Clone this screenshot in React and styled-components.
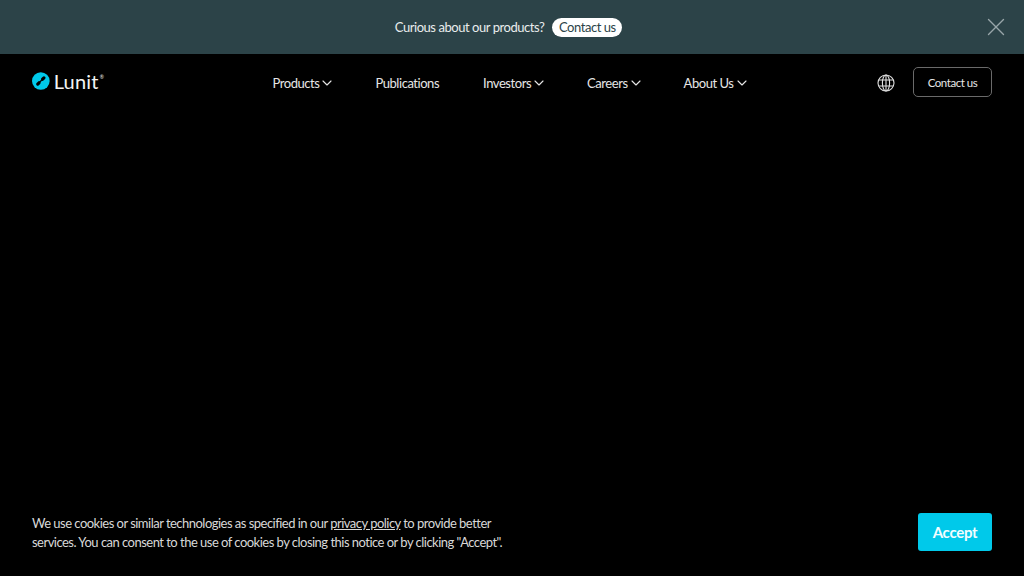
import styled, { createGlobalStyle } from "styled-components";
import { ChevronDown, X } from "lucide-react";

const GlobalStyle = createGlobalStyle`
  html, body {
    margin: 0;
    height: 100%;
    background: #000;
  }
  body {
    font-family: "Lato", "Liberation Sans", sans-serif;
    color: #fff;
  }
  #root {
    height: 100%;
  }
`;

const Page = styled.div`
  height: 100vh;
  display: flex;
  flex-direction: column;
  overflow: hidden;
`;

const Banner = styled.div`
  height: 54px;
  flex: none;
  position: relative;
  padding-right: 7px;
  box-sizing: border-box;
  display: flex;
  align-items: center;
  justify-content: center;
  gap: 8px;
  background: #2c4348;
  font-size: 13px;
  letter-spacing: -0.45px;
  color: #e9eded;
`;

const BannerLink = styled.a`
  height: 19px;
  padding: 0 6.5px;
  display: flex;
  align-items: center;
  border-radius: 10px;
  background: #fff;
  color: #2c4348;
`;

const CloseButton = styled.button`
  position: absolute;
  top: 12px;
  right: 13px;
  width: 30px;
  height: 30px;
  padding: 0;
  border: 0;
  background: none;
  color: #98a6a9;
  display: flex;
`;

const Header = styled.header`
  height: 58px;
  flex: none;
  padding: 0 32px;
  box-sizing: border-box;
  display: flex;
  align-items: center;
  justify-content: space-between;
`;

const Logo = styled.a`
  display: flex;
  align-items: center;
  gap: 4px;
  width: 72px;
  margin-top: -5px;
  font-size: 20px;
  letter-spacing: 0.2px;
  color: #f4f4f4;
`;

const LogoMark = styled.sup`
  font-size: 5px;
  margin: -8px 0 0 -3px;
`;

const Nav = styled.nav`
  display: flex;
  align-items: center;
  gap: 44px;
  margin-left: 37px;
`;

const NavItem = styled.a`
  display: flex;
  align-items: center;
  font-size: 13px;
  letter-spacing: -0.45px;
  color: #e6e6e6;
`;

const Chevron = styled(ChevronDown)`
  margin-right: -4px;
`;

const Actions = styled.div`
  display: flex;
  align-items: center;
  gap: 18px;
`;

const GlobeIcon = styled.svg`
  width: 18px;
  height: 18px;
  fill: none;
  stroke: #e0e0e0;
  stroke-width: 1.1;
`;

const OutlineButton = styled.button`
  width: 79px;
  height: 30px;
  margin-bottom: 2px;
  padding: 0;
  border: 1px solid #6a6a6a;
  border-radius: 5px;
  background: none;
  color: #e6e6e6;
  font: inherit;
  font-size: 11.5px;
  letter-spacing: -0.45px;
`;

const CookieBar = styled.div`
  margin-top: auto;
  padding: 0 32px 24px;
  display: flex;
  align-items: flex-end;
  justify-content: space-between;
`;

const CookieText = styled.p`
  margin: 0;
  width: 490px;
  font-size: 13px;
  line-height: 19px;
  letter-spacing: -0.52px;
  color: #d8d8d8;
`;

const PolicyLink = styled.a`
  text-decoration: underline;
`;

const AcceptButton = styled.button`
  width: 74px;
  height: 38px;
  margin-bottom: 1px;
  padding: 0;
  border: 0;
  border-radius: 3px;
  background: #00c9ea;
  color: #f2fdff;
  font: inherit;
  font-size: 15px;
  font-weight: 700;
  letter-spacing: -0.3px;
`;

const navItems = [
  { label: "Products", menu: true },
  { label: "Publications" },
  { label: "Investors", menu: true },
  { label: "Careers", menu: true },
  { label: "About Us", menu: true },
];

export default function App() {
  return (
    <Page>
      <GlobalStyle />
      <Banner>
        <span>Curious about our products?</span>
        <BannerLink>Contact us</BannerLink>
        <CloseButton aria-label="Close">
          <X size={30} strokeWidth={1.1} />
        </CloseButton>
      </Banner>

      <Header>
        <Logo>
          <svg width="18" height="18" viewBox="0 0 18 18">
            <circle cx="9" cy="9" r="9" fill="#00c9ea" />
            {/* link mark: two heavy ends joined by a thin bar */}
            <path d="M5.8 12.2 L7.2 10.8 M10.8 7.2 L12.2 5.8" stroke="#000" strokeWidth="3.2" strokeLinecap="round" />
            <path d="M7 11 L11 7" stroke="#000" strokeWidth="1.2" />
          </svg>
          Lunit
          <LogoMark>®</LogoMark>
        </Logo>
        <Nav>
          {navItems.map((item) => (
            <NavItem key={item.label}>
              {item.label}
              {item.menu && <Chevron size={16} strokeWidth={1.7} />}
            </NavItem>
          ))}
        </Nav>
        <Actions>
          <GlobeIcon viewBox="0 0 18 18">
            <circle cx="9" cy="9" r="8" />
            <ellipse cx="9" cy="9" rx="3.6" ry="8" />
            <path d="M9 1v16M1.9 6h14.2M1.9 12h14.2" />
          </GlobeIcon>
          <OutlineButton>Contact us</OutlineButton>
        </Actions>
      </Header>

      <CookieBar>
        <CookieText>
          We use cookies or similar technologies as specified in our{" "}
          <PolicyLink>privacy policy</PolicyLink> to provide better services. You
          can consent to the use of cookies by closing this notice or by clicking
          "Accept".
        </CookieText>
        <AcceptButton>Accept</AcceptButton>
      </CookieBar>
    </Page>
  );
}
